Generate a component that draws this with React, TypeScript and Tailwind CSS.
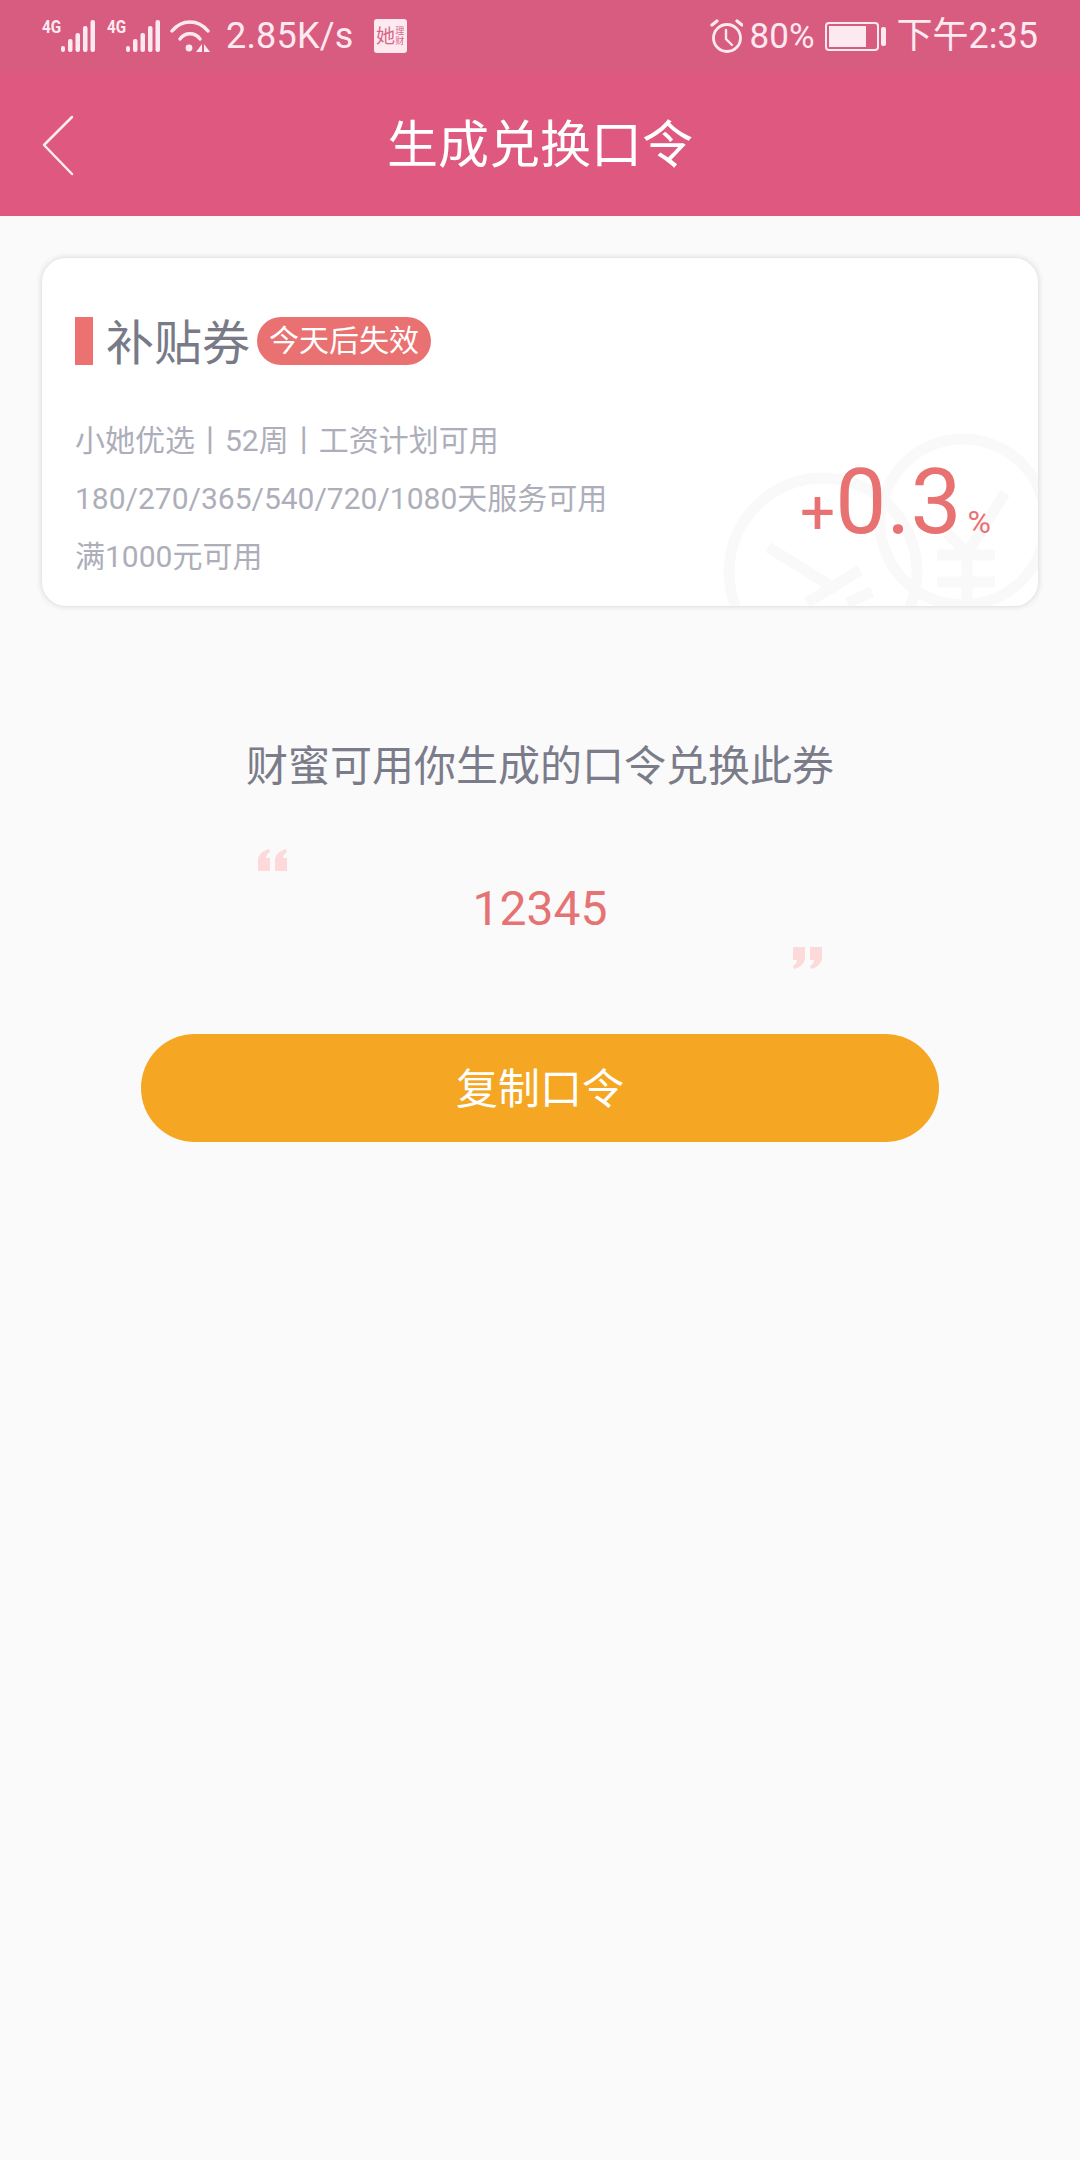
const font = { fontFamily: '"Roboto","Noto Sans CJK SC",sans-serif' };

function Signal() {
  return (
    <div className="relative w-[53px] h-[33px] shrink-0">
      <span className="absolute left-0 top-[-2px] text-[18px] leading-[18px] font-bold text-[#fdeaf0] [font-family:'Roboto',sans-serif] scale-x-[0.85] origin-left">4G</span>
      <svg className="absolute left-0 top-0" width="53" height="33" viewBox="0 0 53 33" fill="#fdeaf0">
        <rect x="19" y="26" width="4" height="6" rx="2" />
        <rect x="26" y="19" width="4.5" height="13" rx="2" />
        <rect x="33.5" y="13" width="4.5" height="19" rx="2" />
        <rect x="41" y="6" width="4.5" height="26" rx="2" />
        <rect x="48.5" y="0" width="4.5" height="32" rx="2" />
      </svg>
    </div>
  );
}

function Wifi() {
  return (
    <svg className="shrink-0" width="40" height="33" viewBox="0 0 40 33" fill="none" stroke="#fdeaf0" strokeWidth="3.4" strokeLinecap="round">
      <path d="M2 11C12 -1 28 -1 38 11" />
      <path d="M10 19C15 12 25 12 30 19" />
      <circle cx="19" cy="28" r="3.4" fill="#fdeaf0" stroke="none" />
      <path d="M32 24l-6 8h6z M34 24v8h6z" fill="#fdeaf0" stroke="none" />
    </svg>
  );
}

function AppIcon() {
  return (
    <div className="w-[33px] h-[34px] rounded-[3px] bg-[#fdeaf0] flex items-center justify-center shrink-0 text-[#d8658a] overflow-hidden">
      <span className="text-[19px] leading-none">她</span>
      <span className="flex flex-col text-[9px] leading-[10px]">
        <span>理</span>
        <span>财</span>
      </span>
    </div>
  );
}

function Alarm() {
  return (
    <svg className="shrink-0" width="33" height="34" viewBox="0 0 33 34" fill="none" stroke="#fdeaf0" strokeWidth="2.8" strokeLinecap="round">
      <circle cx="17" cy="19" r="13.5" />
      <path d="M16 11v9l6 6" strokeWidth="2.4" />
      <path d="M2 6l5-4 M32 6l-5-4" strokeWidth="3.2" />
    </svg>
  );
}

function Battery() {
  return (
    <div className="flex items-center gap-[2px] shrink-0">
      <div className="w-[54px] h-[29px] rounded-[4px] border-2 border-[#fdeaf0] p-[2px]">
        <div className="w-[37px] h-full bg-[#fdeaf0]" />
      </div>
      <div className="w-[5px] h-[19px] rounded-[2px] bg-[#fdeaf0]" />
    </div>
  );
}

function Quote({ close }: { close?: boolean }) {
  return (
    <svg width="29" height="22" viewBox="0 0 29 22" fill="#fed9d9" className={close ? "rotate-180" : ""}>
      <path d="M0 22V12C0 6 4 2 11 0L12 3C9 5 8 7 8 9H12V22Z" />
      <path d="M17 22V12C17 6 21 2 28 0L29 3C26 5 25 7 25 9H29V22Z" />
    </svg>
  );
}

function Coins() {
  return (
    <svg className="absolute right-0 bottom-0" width="320" height="180" viewBox="0 0 320 180" fill="none" stroke="#f9f9f9" strokeWidth="11">
      <circle cx="105" cy="146" r="94" />
      <circle cx="245" cy="96" r="83" />
      <path d="M50 121L119 164 M142 144L89 177 M154 166L129 177" />
      <path d="M219 129H277 M219 156H277 M249 127V180 M287 67L249 127 M229 107L249 127" />
    </svg>
  );
}

export default function App() {
  return (
    <div className="w-[1080px] h-[2160px] bg-[#fafafa] flex flex-col overflow-hidden" style={font}>
      <div className="h-[72px] bg-[#d85c80] flex items-center justify-between px-[42px] text-[#fdeaf0] text-[36px] leading-none">
        <div className="flex items-center">
          <Signal />
          <div className="w-[12px]" />
          <Signal />
          <div className="w-[10px]" />
          <Wifi />
          <span className="ml-[16px] tracking-[0.2px]">2.85K/s</span>
          <div className="w-[20px]" />
          <AppIcon />
        </div>
        <div className="flex items-center">
          <Alarm />
          <span className="ml-[7px] mr-[10px] text-[35px]">80%</span>
          <Battery />
          <span className="ml-[11px]">下午2:35</span>
        </div>
      </div>

      <div className="h-[144px] bg-[#de587f] flex items-center justify-center relative">
        <svg className="absolute left-[40px] top-[42px]" width="36" height="64" viewBox="0 0 36 64" fill="none" stroke="#fdeef2" strokeWidth="2.5" strokeLinecap="round" strokeLinejoin="round">
          <path d="M32 3L4 31L32 60" />
        </svg>
        <h1 className="text-[51px] leading-none text-white font-normal pt-[2px]">生成兑换口令</h1>
      </div>

      <div className="mx-[42px] mt-[42px] h-[348px] bg-white rounded-[24px] shadow-[0_0_6px_rgba(0,0,0,0.16)] relative overflow-hidden pl-[33px] pt-[59px]">
        <Coins />
        <div className="flex items-center h-[48px] relative">
          <div className="w-[18px] h-[48px] bg-[#ec7272]" />
          <span className="ml-[13px] text-[48px] leading-none text-[#787a87] pt-[5px]">补贴券</span>
          <span className="ml-[7px] w-[174px] h-[48px] rounded-full bg-[#e97171] text-white text-[30px] flex items-center justify-center leading-none">今天后失效</span>
        </div>
        <div className="mt-[47px] text-[30px] leading-[58px] text-[#adaeba] relative">
          <div>小她优选丨52周丨工资计划可用</div>
          <div>180/270/365/540/720/1080天服务可用</div>
          <div>满1000元可用</div>
        </div>
        <div className="absolute right-[47px] bottom-[58px] flex items-baseline text-[#e87272] leading-none">
          <span className="text-[62px]">+</span>
          <span className="text-[91px]">0.3</span>
          <span className="ml-[6px] text-[32px]">%</span>
        </div>
      </div>

      <p className="mt-[137px] text-center text-[42px] leading-[48px] text-[#7b7c8a]">财蜜可用你生成的口令兑换此券</p>

      <div className="mt-[58px] mx-auto w-[564px] flex flex-col">
        <div className="self-start"><Quote /></div>
        <div className="text-center text-[48px] leading-[56px] text-[#e57373] mt-[10px]">12345</div>
        <div className="self-end mt-[10px]"><Quote close /></div>
      </div>

      <button className="mt-[65px] mx-auto w-[798px] h-[108px] rounded-full bg-[#f5a623] text-white text-[42px] leading-none flex items-center justify-center pt-[3px]">复制口令</button>
    </div>
  );
}
